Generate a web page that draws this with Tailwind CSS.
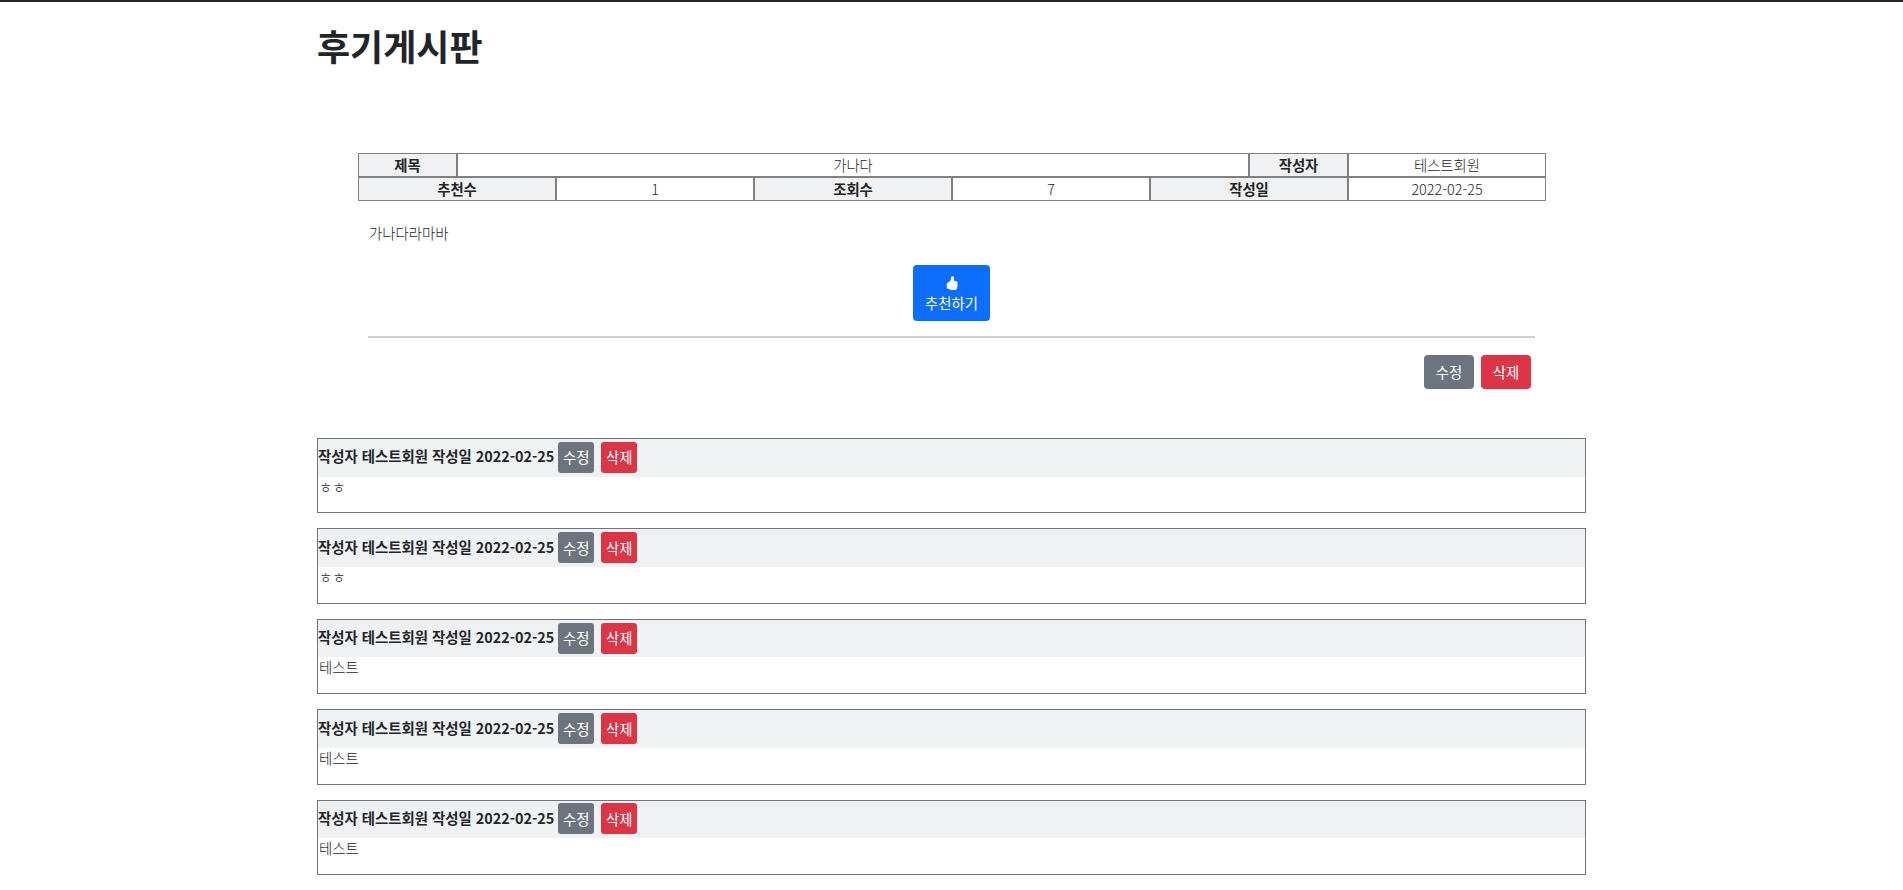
<!DOCTYPE html>
<html lang="ko">
<head>
<meta charset="utf-8">
<title>후기게시판</title>
<script src="https://cdn.jsdelivr.net/npm/@tailwindcss/browser@4"></script>
</head>
<body class="bg-white text-[#212529] border-t-2 border-[#212529] font-['Noto_Sans_CJK_KR','Noto_Sans',sans-serif] text-base leading-normal">
<main class="w-[1269px] mx-auto">
  <h1 class="text-[36px] leading-[48px] font-bold mt-[19px]">후기게시판</h1>

  <section class="w-[1188px] mt-[84px] ml-[41px] text-[14.4px] font-light leading-[22px]">
    <div class="grid grid-cols-12 text-center">
      <div class="col-span-1 border border-[#808080] bg-[#eff1f3] font-bold">제목</div>
      <div class="col-span-8 border border-[#808080]">가나다</div>
      <div class="col-span-1 border border-[#808080] bg-[#eff1f3] font-bold">작성자</div>
      <div class="col-span-2 border border-[#808080]">테스트회원</div>
    </div>
    <div class="grid grid-cols-6 text-center">
      <div class="border border-[#808080] bg-[#eff1f3] font-bold">추천수</div>
      <div class="border border-[#808080]">1</div>
      <div class="border border-[#808080] bg-[#eff1f3] font-bold">조회수</div>
      <div class="border border-[#808080]">7</div>
      <div class="border border-[#808080] bg-[#eff1f3] font-bold">작성일</div>
      <div class="border border-[#808080]">2022-02-25</div>
    </div>
  </section>

  <section class="ml-[51px] w-[1167px]">
    <p class="text-[14.4px] font-light mt-[21px] ml-px leading-[21px]">가나다라마바</p>
    <div class="flex justify-center mt-[22px]">
      <button class="w-[77px] h-[56px] bg-[#0d6efd] text-white rounded text-[14.4px] flex flex-col items-center justify-center">
        <svg class="w-[14px] h-[14px] mt-[3px]" viewBox="0 0 16 16" fill="currentColor"><path d="M6.956 1.745C7.021.81 7.908.087 8.864.325l.261.066c.463.116.874.456 1.012.965.22.816.533 2.511.062 4.51a9.84 9.84 0 0 1 .443-.051c.713-.065 1.669-.072 2.516.21.518.173.994.681 1.2 1.273.184.532.16 1.162-.234 1.733.058.119.103.242.138.363.077.27.113.567.113.856 0 .289-.036.586-.113.856-.039.135-.09.273-.16.404.169.387.107.819-.003 1.148a3.163 3.163 0 0 1-.488.901c.054.152.076.312.076.465 0 .305-.089.625-.253.912C13.1 15.522 12.437 16 11.5 16H8c-.605 0-1.07-.081-1.466-.218a4.82 4.82 0 0 1-.97-.484l-.048-.03c-.504-.307-.999-.609-2.068-.722C2.682 14.464 2 13.846 2 13V9c0-.85.685-1.432 1.357-1.615.849-.232 1.574-.787 2.132-1.41.56-.627.914-1.28 1.039-1.639.199-.575.356-1.539.428-2.59z"/></svg>
        <span class="leading-[21px] mt-[2px]">추천하기</span>
      </button>
    </div>
    <hr class="mt-[15px] border-t-2 border-[#d0d0d0]">
    <div class="flex justify-end gap-[7px] mt-[17px] pr-[4px]">
      <button class="w-[50px] h-[34px] bg-[#6c757d] text-white rounded text-[14.4px]">수정</button>
      <button class="w-[50px] h-[34px] bg-[#dc3545] text-white rounded text-[14.4px]">삭제</button>
    </div>
  </section>

  <section class="mt-[49px] flex flex-col gap-[15px]">
    <article class="h-[75.4px] border border-[#6c757d]">
      <div class="h-[37.5px] bg-[#eff1f3] flex items-center font-bold text-[14.4px]"><span class="mb-[3px]">작성자 테스트회원 작성일 2022-02-25</span>
        <button class="ml-[4px] w-[36px] h-[31px] mb-[1px] bg-[#6c757d] text-white rounded-[3px] text-[14.4px] font-normal">수정</button>
        <button class="ml-[7px] w-[36px] h-[31px] mb-[1px] bg-[#dc3545] text-white rounded-[3px] text-[14.4px] font-normal">삭제</button>
      </div>
      <p class="text-[14.4px] font-light pl-px leading-[20px]">ㅎㅎ</p>
    </article>
    <article class="h-[75.4px] border border-[#6c757d]">
      <div class="h-[37.5px] bg-[#eff1f3] flex items-center font-bold text-[14.4px]"><span class="mb-[3px]">작성자 테스트회원 작성일 2022-02-25</span>
        <button class="ml-[4px] w-[36px] h-[31px] mb-[1px] bg-[#6c757d] text-white rounded-[3px] text-[14.4px] font-normal">수정</button>
        <button class="ml-[7px] w-[36px] h-[31px] mb-[1px] bg-[#dc3545] text-white rounded-[3px] text-[14.4px] font-normal">삭제</button>
      </div>
      <p class="text-[14.4px] font-light pl-px leading-[20px]">ㅎㅎ</p>
    </article>
    <article class="h-[75.4px] border border-[#6c757d]">
      <div class="h-[37.5px] bg-[#eff1f3] flex items-center font-bold text-[14.4px]"><span class="mb-[3px]">작성자 테스트회원 작성일 2022-02-25</span>
        <button class="ml-[4px] w-[36px] h-[31px] mb-[1px] bg-[#6c757d] text-white rounded-[3px] text-[14.4px] font-normal">수정</button>
        <button class="ml-[7px] w-[36px] h-[31px] mb-[1px] bg-[#dc3545] text-white rounded-[3px] text-[14.4px] font-normal">삭제</button>
      </div>
      <p class="text-[14.4px] font-light pl-px leading-[20px]">테스트</p>
    </article>
    <article class="h-[75.4px] border border-[#6c757d]">
      <div class="h-[37.5px] bg-[#eff1f3] flex items-center font-bold text-[14.4px]"><span class="mb-[3px]">작성자 테스트회원 작성일 2022-02-25</span>
        <button class="ml-[4px] w-[36px] h-[31px] mb-[1px] bg-[#6c757d] text-white rounded-[3px] text-[14.4px] font-normal">수정</button>
        <button class="ml-[7px] w-[36px] h-[31px] mb-[1px] bg-[#dc3545] text-white rounded-[3px] text-[14.4px] font-normal">삭제</button>
      </div>
      <p class="text-[14.4px] font-light pl-px leading-[20px]">테스트</p>
    </article>
    <article class="h-[75.4px] border border-[#6c757d]">
      <div class="h-[37.5px] bg-[#eff1f3] flex items-center font-bold text-[14.4px]"><span class="mb-[3px]">작성자 테스트회원 작성일 2022-02-25</span>
        <button class="ml-[4px] w-[36px] h-[31px] mb-[1px] bg-[#6c757d] text-white rounded-[3px] text-[14.4px] font-normal">수정</button>
        <button class="ml-[7px] w-[36px] h-[31px] mb-[1px] bg-[#dc3545] text-white rounded-[3px] text-[14.4px] font-normal">삭제</button>
      </div>
      <p class="text-[14.4px] font-light pl-px leading-[20px]">테스트</p>
    </article>
  </section>
</main>
</body>
</html>
